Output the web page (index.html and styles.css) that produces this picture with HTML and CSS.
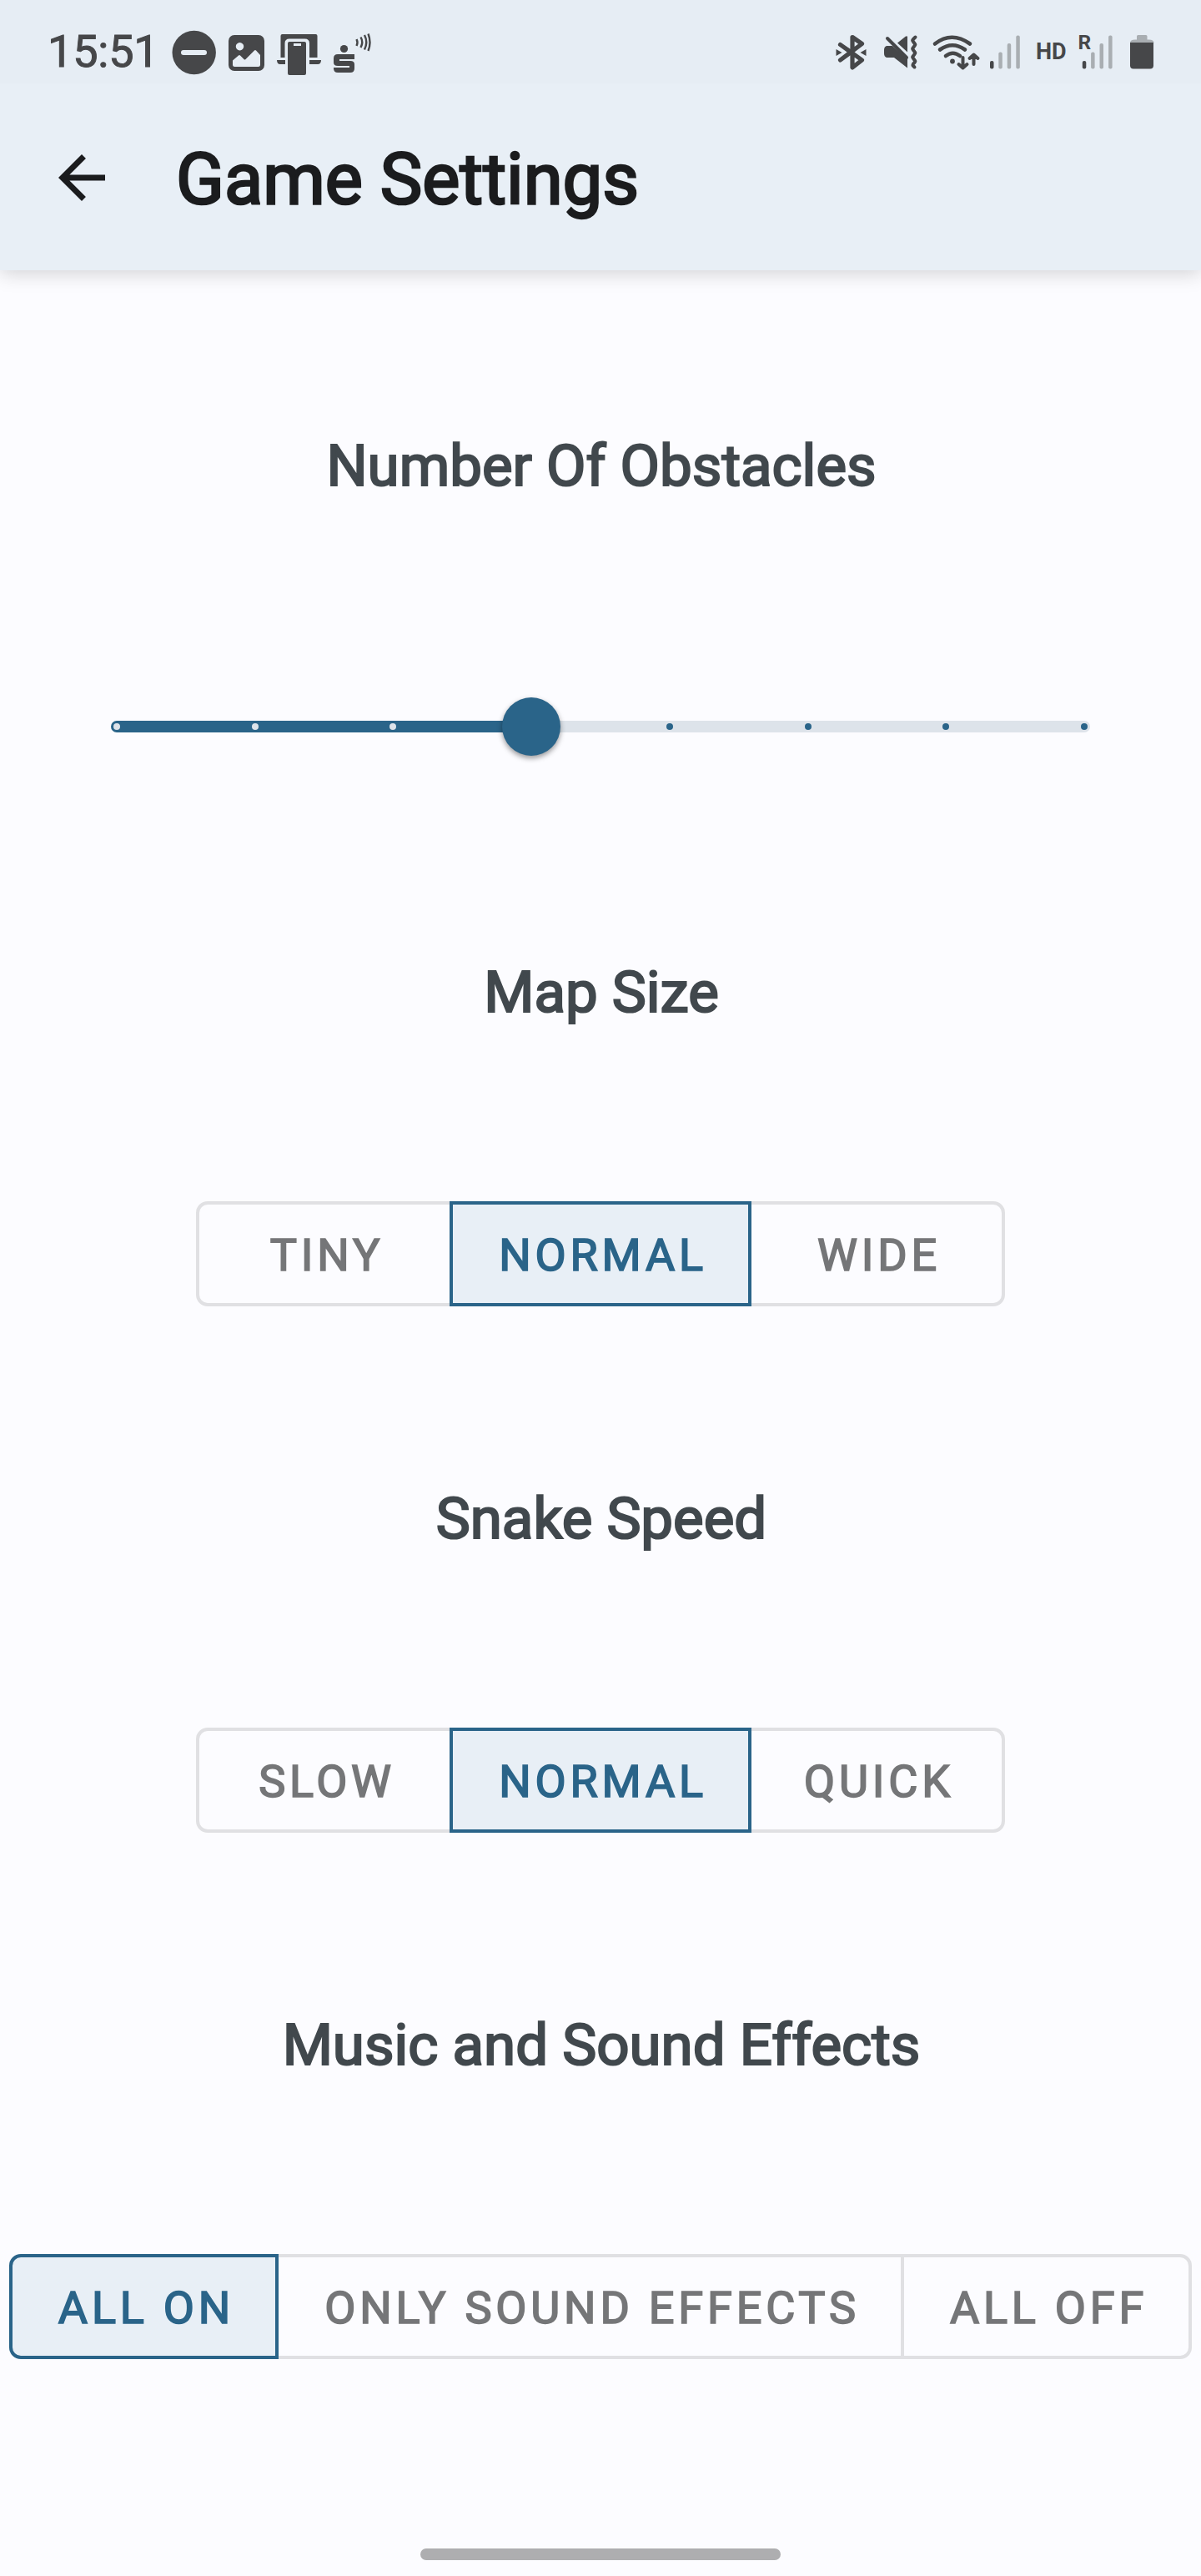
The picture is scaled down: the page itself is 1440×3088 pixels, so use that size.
FILE: index.html
```html
<!DOCTYPE html>
<html lang="en">
<head>
<meta charset="utf-8">
<title>Game Settings</title>
<link rel="stylesheet" href="styles.css">
</head>
<body>
<header class="top">
  <div class="status">
    <span class="clock">15:51</span>
    <svg class="status-left" width="260" height="90" viewBox="200 20 260 90">
      <circle cx="232.700" cy="63" r="26.200"/>
      <rect class="cut" x="217" y="60" width="31" height="6" rx="3"/>
      <path fill-rule="evenodd" d="M281 42h29a7 7 0 0 1 7 7v29a7 7 0 0 1-7 7h-29a7 7 0 0 1-7-7v-29a7 7 0 0 1 7-7zM287.500 51a4.700 4.700 0 1 0 .01 0zM279 72.500v5q0 2.500 2.500 2.500h28q2.500 0 2.500-2.500v-11.500l-5-5.500q-1-1-2 0l-10.500 10.500q-1 1-2 0l-4.500-4.500q-1-1-2 0z"/>
      <path d="M338.500 41h40a2 2 0 0 1 2 2v26h-9.500v-17q0-5.500-5.500-5.500h-18.500q-5.500 0-5.500 5.500v17h-5v-26a2 2 0 0 1 2-2zM332 72h10v5h-6q-4 0-4-5zM371 72h14q0 5-4 5h-10z"/>
      <path fill-rule="evenodd" d="M347 50h18q2 0 2 2v36q0 2-2 2h-18q-2 0-2-2v-36q0-2 2-2zM352 52v3h9v-3z"/>
      <circle cx="412.500" cy="58.500" r="4.600"/>
      <path d="M405 65h20v6h-18v2h13q5 0 5 4v5q0 5-5 5h-15q-5 0-5-5v-1h19v-2h-14q-5 0-5-4v-5q0-5 5-5z"/>
      <path class="thin" d="M427.500 47q2 4 0 8M432.500 44.500q3.500 6 0 12.500M437 42q4.500 8.500 0 17.500M441.500 40.500q4 10.500 0 20.500"/>
    </svg>
    <svg class="status-right" width="410" height="90" viewBox="1000 20 410 90">
      <path class="line bold" d="M1007.500 53.500l26 18.500-11.500 9v-36.500l11.500 8-26 19.500" />
      <path d="M1002.500 59l7 4-7 4zM1038.500 59l-7 4 7 4z"/>
      <path d="M1063 55h7l18 16v10.500l-16-12.500h-9q-3-1-3-5v-4q0-4 3-5zM1076 51.500l10-8h2v19z"/>
      <path class="line slim" d="M1064 46l23 23"/>
      <path class="line slim" d="M1097.500 44.500l-2.500 2.500q-1.500 1.500 0 3l1.500 2q1.500 1.500 0 3l-1.500 2q-1.500 1.500 0 3l1.500 2q1.500 1.500 0 3l-1.500 2q-1.500 1.500 0 3l1.500 2q1.500 1.500 0 3l-1.500 1.500q-1 1.500 0 2.500l1.500 1.500"/>
      <path class="line" d="M1121 52.500q20-15.500 42 0M1127 59.500q15-10.500 30 0M1134 67q8.500-6.500 17 0"/>
      <circle cx="1142" cy="73.500" r="2.900"/>
      <path class="line slim" d="M1154.500 69v12M1149.500 77l5 4.500 5-4.500M1167.500 77v-11M1162.500 70l5-4.500 5 4.500"/>
      <g id="signal-a"><rect x="1187" y="73" width="4.500" height="9.500" rx="2"/><g class="pale"><rect x="1197.300" y="62.500" width="4.500" height="20" rx="2"/><rect x="1207.700" y="52" width="4.500" height="30.500" rx="2"/><rect x="1218.300" y="42.500" width="4.500" height="40" rx="2"/></g></g>
      <text class="hd" x="1242" y="71">HD</text>
      <text class="roam" x="1292.500" y="58.500">R</text>
      <use href="#signal-a" x="110.800"/>
      <path class="pale" d="M1364 42h10q1.500 0 1.500 1.500v4h2q6 0 6 4h-28.500q0-4 6-4h2v-4q0-1.500 1.500-1.500z"/>
      <path d="M1355 51h28v27.500q0 4-4 4h-20q-4 0-4-4z"/>
    </svg>
  </div>
  <div class="appbar">
    <svg class="back" width="84" height="84" viewBox="0 0 24 24"><path d="M20 11H7.830l5.590-5.590L12 4l-8 8 8 8 1.410-1.410L7.830 13H20z"/></svg>
    <h1 class="title">Game Settings</h1>
  </div>
</header>
<main>
  <section class="setting">
    <h2 class="label">Number Of Obstacles</h2>
    <div class="slider">
      <i class="tick on"></i><i class="tick on"></i><i class="tick on"></i><i class="knob"></i><i class="tick"></i><i class="tick"></i><i class="tick"></i><i class="tick"></i>
    </div>
  </section>
  <section class="setting">
    <h2 class="label">Map Size</h2>
    <div class="group even">
      <button class="option">TINY</button><button class="option selected">NORMAL</button><button class="option">WIDE</button>
    </div>
  </section>
  <section class="setting">
    <h2 class="label">Snake Speed</h2>
    <div class="group even">
      <button class="option">SLOW</button><button class="option selected">NORMAL</button><button class="option">QUICK</button>
    </div>
  </section>
  <section class="setting">
    <h2 class="label">Music and Sound Effects</h2>
    <div class="group wide">
      <button class="option selected">ALL ON</button><button class="option">ONLY SOUND EFFECTS</button><button class="option">ALL OFF</button>
    </div>
  </section>
</main>
<footer class="navbar"><div class="handle"></div></footer>
</body>
</html>
```
FILE: styles.css
```css
* { box-sizing: border-box; }
body {
  margin: 0;
  height: 3088px;
  display: flex;
  flex-direction: column;
  background: #fcfcff;
  font-family: Roboto, sans-serif;
  overflow: hidden;
}
.top {
  height: 324px;
  flex: none;
  background: #e8eff6;
  box-shadow: 0 4px 22px rgba(0, 0, 0, .17);
}
.status {
  height: 100px;
  padding: 20px 30px 0 57px;
  display: flex;
  background: #e6edf4;
  color: #464749;
}
.status svg { fill: #464749; flex: none; }
.clock { width: 143px; font-size: 54px; line-height: 84px; letter-spacing: -.2px; -webkit-text-stroke: 1px #464749; }
.status-right { margin-left: auto; }
.status .cut { fill: #e6edf4; }
.status .pale { fill: #a9aeb2; }
.status .line, .status .thin { fill: none; stroke: #464749; stroke-width: 4.600; stroke-linecap: round; stroke-linejoin: round; }
.status .bold { stroke-width: 5.200; }
.status .slim { stroke-width: 4; }
.status .thin { stroke-width: 2.400; stroke-linecap: butt; }
.hd { font-size: 27px; font-weight: 700; }
.roam { font-size: 24.500px; font-weight: 700; }
.appbar { height: 224px; padding: 0 56px; display: flex; align-items: center; gap: 71px; }
.back { fill: #1b1c1e; margin-top: 1px; }
.title {
  margin: 6px 0 0;
  font-size: 85px;
  font-weight: 400;
  line-height: 104px;
  color: #1b1c1e;
  -webkit-text-stroke: 2.700px #1b1c1e;
}
.setting { height: 631px; display: flex; flex-direction: column; align-items: center; }
.label {
  margin: 193px 0 0;
  padding-left: 2px;
  font-size: 69px;
  font-weight: 400;
  line-height: 84px;
  color: #41484d;
  -webkit-text-stroke: 2.200px #41484d;
}
.slider {
  width: 1174px;
  height: 14px;
  margin-top: 263px;
  padding: 0 3px;
  display: flex;
  justify-content: space-between;
  align-items: center;
  border-radius: 7px;
  background: linear-gradient(to right, #2a6489 504px, #dde3ea 504px);
}
.tick { width: 8px; height: 8px; border-radius: 50%; background: #2a6489; }
.tick.on { background: #dde3ea; }
.knob { width: 70px; height: 70px; margin: 0 -31px; border-radius: 50%; background: #2a6489; box-shadow: 0 3px 6px rgba(0, 0, 0, .4); }
.group { height: 126px; margin-top: 208px; display: flex; }
.option {
  border: 4px solid #e0e0e3;
  background: none;
  padding: 3px 0 0 6px;
  margin: 0 0 0 -4px;
  font: 400 54px/64px Roboto, sans-serif;
  letter-spacing: 4.800px;
  color: #757678;
  -webkit-text-stroke: 1.700px currentColor;
  white-space: nowrap;
}
.option:first-child { margin-left: 0; border-radius: 14px 0 0 14px; }
.option:last-child { border-radius: 0 14px 14px 0; }
.even .option { width: 308px; padding-left: 6px; }
.selected { position: relative; background: #e8eff6; border-color: #2a6489; color: #2a6489; }
.even .selected { width: 362px; padding-left: 6px; }
.wide .option { width: 754px; }
.wide .option:first-child { width: 323px; }
.wide .option:last-child { width: 349px; }
.navbar { margin-top: auto; height: 33px; display: flex; justify-content: center; flex: none; }
.handle { width: 432px; height: 14px; border-radius: 7px; background: #aeaeb0; }
```
